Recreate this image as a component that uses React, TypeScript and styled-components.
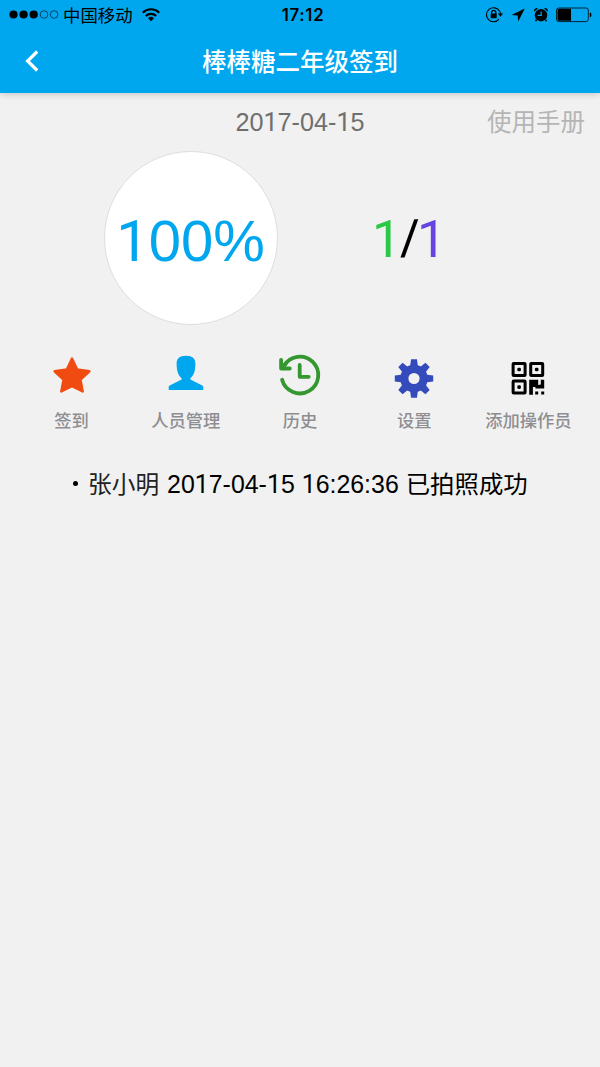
import React from 'react';
import styled, { createGlobalStyle } from 'styled-components';

const GlobalStyle = createGlobalStyle`
  * { box-sizing: border-box; }
  body {
    margin: 0;
    background: #f1f1f1;
    font-family: "Liberation Sans", "Noto Sans CJK SC", sans-serif;
  }
  svg { display: block; flex: none; }
`;

const Screen = styled.div`
  min-height: 1067px;
  background: #f1f1f1;
  overflow: hidden;
`;

const Header = styled.header`
  height: 93px;
  background: #00a7ef;
  box-shadow: 0 1px 7px rgba(0, 0, 0, 0.2);
`;

const StatusBar = styled.div`
  display: grid;
  grid-template-columns: 1fr auto 1fr;
  align-items: center;
  height: 30px;
  padding: 0 8px 0 9px;
  color: #000;
`;

const Carrier = styled.div`
  display: flex;
  align-items: center;
  font: 17.4px/30px "Noto Sans CJK SC", sans-serif;
`;

const CarrierName = styled.span`
  margin: 0 9px 0 4px;
`;

const Clock = styled.span`
  padding-left: 5px;
  font: 600 16.8px/30px Inter, "Liberation Sans", sans-serif;
  letter-spacing: 0.7px;
`;

const StatusIcons = styled.div`
  display: flex;
  justify-content: flex-end;
`;

const NavBar = styled.div`
  display: grid;
  grid-template-columns: 64px 1fr 64px;
  align-items: center;
  height: 61px;
`;

const BackButton = styled.button`
  height: 60px;
  padding: 0 0 0 24px;
  border: 0;
  background: none;
`;

const Title = styled.h1`
  margin: 0;
  text-align: center;
  color: #fff;
  font: 500 24.5px/61px "Noto Sans CJK SC", sans-serif;
`;

const DateRow = styled.div`
  display: grid;
  grid-template-columns: 1fr auto 1fr;
  height: 58px;
  padding: 0 15px;
`;

const Today = styled.span`
  grid-column: 2;
  color: #6f6f6f;
  font-size: 25.2px;
  line-height: 58px;
`;

const Manual = styled.a`
  justify-self: end;
  color: #b5b5b5;
  font: 400 24.5px/56px "Noto Sans CJK SC", sans-serif;
`;

const Summary = styled.section`
  display: flex;
  height: 174px;
  padding-left: 104px;
`;

const RateCircle = styled.div`
  width: 174px;
  height: 174px;
  padding-right: 1px;
  border: 1.5px solid #dedede;
  border-radius: 50%;
  background: #fff;
  color: #00a7ef;
  font-size: 58px;
  line-height: 178px;
  text-align: center;
  white-space: nowrap;
`;

const Ratio = styled.div`
  margin-left: 94px;
  color: #000;
  font-size: 52px;
  line-height: 176px;
  letter-spacing: 0.6px;
`;

const Count = styled.span<{ $color: string }>`
  color: ${({ $color }) => $color};
`;

const Slash = styled.span`
  display: inline-block;
  line-height: 1;
  transform: skewX(-5deg);
`;

const One = styled.span`
  font-family: Roboto, sans-serif;
  line-height: 1;
`;

const Menu = styled.nav`
  display: grid;
  grid-template-columns: repeat(5, 114.2px);
  justify-content: center;
  margin-top: 24px;
`;

const MenuItem = styled.div`
  display: flex;
  flex-direction: column;
  align-items: center;
`;

const MenuLabel = styled.span`
  margin-top: 2px;
  color: #8e8e92;
  font: 500 17.3px/26px "Noto Sans CJK SC", sans-serif;
`;

const LogLine = styled.div`
  display: flex;
  align-items: baseline;
  margin-top: 32px;
  padding-left: 73px;
  color: #000;
  font: 24.4px/36px "Noto Sans CJK SC", sans-serif;
  white-space: pre;
`;

const Bullet = styled.i`
  width: 5px;
  height: 5px;
  margin-right: 10px;
  border-radius: 50%;
  background: #000;
  align-self: center;
`;

const Person = styled.span`
  color: #222;
  font-size: 23.7px;
`;

const Stamp = styled.span`
  margin: 0 7px 0 8px;
  font-family: "Liberation Sans", sans-serif;
  font-size: 24.9px;
`;

/* Numeric text whose "1" has a plain stem, without a foot serif. */
const Digits = ({ text }: { text: string }) => (
  <>{text.split('').map((c, i) => (c === '1' ? <One key={i}>1</One> : c))}</>
);

const SignalIcon = () => (
  <svg width="50" height="12" viewBox="0 0 50 12">
    {[4.5, 14.6, 24.7].map((x) => <circle key={x} cx={x} cy="5.5" r="4.1" />)}
    {[35, 45.1].map((x) => (
      <circle key={x} cx={x} cy="5.5" r="3.8" fill="none" stroke="#000" strokeWidth="0.6" />
    ))}
  </svg>
);

const WifiIcon = () => (
  <svg width="18" height="14" viewBox="0 0 18 14" fill="none" stroke="#000" strokeWidth="2.1">
    <path d="M.8 4.7a11.6 11.6 0 0 1 16.4 0M3.8 8a7.35 7.35 0 0 1 10.4 0" />
    <path d="M9 13.3 6 10.3a4.3 4.3 0 0 1 6 0z" fill="#000" stroke="none" />
  </svg>
);

const DeviceIcons = () => (
  <svg width="106" height="20" viewBox="486 5 106 20">
    <g fill="none" stroke="#000" strokeWidth="1.1">
      <path d="M499.6 11.3a7 7 0 1 0-.6 7.8M499.6 11.3q.8 1 .9 2.4" />
      <path d="M491.6 14v-1.5a2.1 2.1 0 0 1 4.2 0V14" strokeWidth="1.2" />
    </g>
    <rect x="490.7" y="13.4" width="6" height="4.8" rx=".5" />
    <path d="M497.8 13.4h5.2l-2.6 3.4z" />
    <path d="m524.8 8.6-13.3 6.3 6.2.5.5 6.2z" />
    <circle cx="541" cy="15.2" r="6.2" />
    <path d="M534.2 11.8a2.8 2.8 0 0 1 3.8-3.5zM547.8 11.8a2.8 2.8 0 0 0-3.8-3.5zM536 19l-1.2 2.2h2.5zM546 19l1.2 2.2h-2.5z" />
    <path d="M541.2 11.4v4h-3.6" fill="none" stroke="#00a7ef" strokeWidth="1.2" />
    <rect x="556.5" y="8" width="31.8" height="13.6" rx="2.2" fill="none" stroke="#000" strokeWidth=".8" />
    <path d="M559 8.8h12v12h-12q-1.5 0-1.5-1.5v-9q0-1.5 1.5-1.5zM589.8 12.5c2.2.4 2.2 4.4 0 4.8z" />
  </svg>
);

const BackIcon = () => (
  <svg width="16" height="24" viewBox="0 0 16 24">
    <path d="M13.2 2.5 3.6 12l9.6 9.5" fill="none" stroke="#fff" strokeWidth="3.2" />
  </svg>
);

const StarIcon = () => (
  <svg width="42" height="56" viewBox="0 0 42 56">
    <path
      d="m21 9.5 5.2 11 12.2 1.8-8.9 8.4 2.2 11.8L21 37.2l-10.7 5.3 2.2-11.8-8.9-8.4 12.2-1.8z"
      fill="#f04b10"
      stroke="#f04b10"
      strokeWidth="2.4"
      strokeLinejoin="round"
    />
  </svg>
);

const PersonIcon = () => (
  <svg width="42" height="56" viewBox="0 0 42 56">
    <path
      d="M21 6.7c6.4 0 9.5 2.8 9.4 8-.1 7.2-1.4 11.2-5 14.6v1.3l11.4 5.6c1.1.5 1.5 1 1.5 1.9v2.3q0 .6-.6.6H4.3q-.6 0-.6-.6v-2.3c0-.9.4-1.4 1.5-1.9l11.4-5.6v-1.3c-3.6-3.4-4.9-7.4-5-14.6-.1-5.2 3-8 9.4-8z"
      fill="#00a7ef"
    />
  </svg>
);

const HistoryIcon = () => (
  <svg width="44" height="56" viewBox="0 0 44 56" fill="none" stroke="#34972f" strokeWidth="3.8" strokeLinecap="round" strokeLinejoin="round">
    <path d="M4.1 30.8A18.4 18.4 0 1 0 5.8 17" />
    <path d="M3.1 10.8v8.7h8.7M4 18.7l4.4-4.8M21.7 16v11.8h9" />
  </svg>
);

const GearIcon = () => (
  <svg width="42" height="56" viewBox="-21 -29.5 42 56" fill="#344bbb">
    {[0, 45, 90, 135, 180, 225, 270, 315].map((angle) => (
      <path key={angle} d="M-4-11-3-19.2h6L4-11z" transform={`rotate(${angle})`} />
    ))}
    <circle r="9.7" fill="none" stroke="#344bbb" strokeWidth="8.2" />
  </svg>
);

const QrIcon = () => (
  <svg width="34" height="56" viewBox="0 0 34 56">
    {[[0.6, 13], [18.2, 13], [0.6, 30.6]].map(([x, y]) => (
      <g key={`${x}-${y}`}>
        <rect x={x + 1.5} y={y + 1.5} width="12" height="12" rx=".6" fill="none" stroke="#000" strokeWidth="3" />
        <rect x={x + 5.7} y={y + 5.7} width="3.6" height="3.6" rx="1.4" />
      </g>
    ))}
    <path d="M18.2 30.8h9v5.2l2.6-.6v-4.6h3.4v8.8h-8.8v-1.6h-2.5v7.8h-3.7zM24.2 42.5h3v3h-3zM30.2 42.5h3v3h-3z" />
  </svg>
);

const menu = [
  { label: '签到', Icon: StarIcon },
  { label: '人员管理', Icon: PersonIcon },
  { label: '历史', Icon: HistoryIcon },
  { label: '设置', Icon: GearIcon },
  { label: '添加操作员', Icon: QrIcon },
];

export default function App() {
  return (
    <Screen>
      <GlobalStyle />
      <Header>
        <StatusBar>
          <Carrier>
            <SignalIcon />
            <CarrierName>中国移动</CarrierName>
            <WifiIcon />
          </Carrier>
          <Clock>17:12</Clock>
          <StatusIcons><DeviceIcons /></StatusIcons>
        </StatusBar>
        <NavBar>
          <BackButton aria-label="返回"><BackIcon /></BackButton>
          <Title>棒棒糖二年级签到</Title>
        </NavBar>
      </Header>
      <DateRow>
        <Today><Digits text="2017-04-15" /></Today>
        <Manual>使用手册</Manual>
      </DateRow>
      <Summary>
        <RateCircle><Digits text="100%" /></RateCircle>
        <Ratio>
          <Count $color="#2bc845"><One>1</One></Count>
          <Slash>/</Slash>
          <Count $color="#6544df"><One>1</One></Count>
        </Ratio>
      </Summary>
      <Menu>
        {menu.map(({ label, Icon }) => (
          <MenuItem key={label}>
            <Icon />
            <MenuLabel>{label}</MenuLabel>
          </MenuItem>
        ))}
      </Menu>
      <LogLine>
        <Bullet />
        <Person>张小明</Person>
        <Stamp><Digits text="2017-04-15 16:26:36" /></Stamp>
        <span>已拍照成功</span>
      </LogLine>
    </Screen>
  );
}
